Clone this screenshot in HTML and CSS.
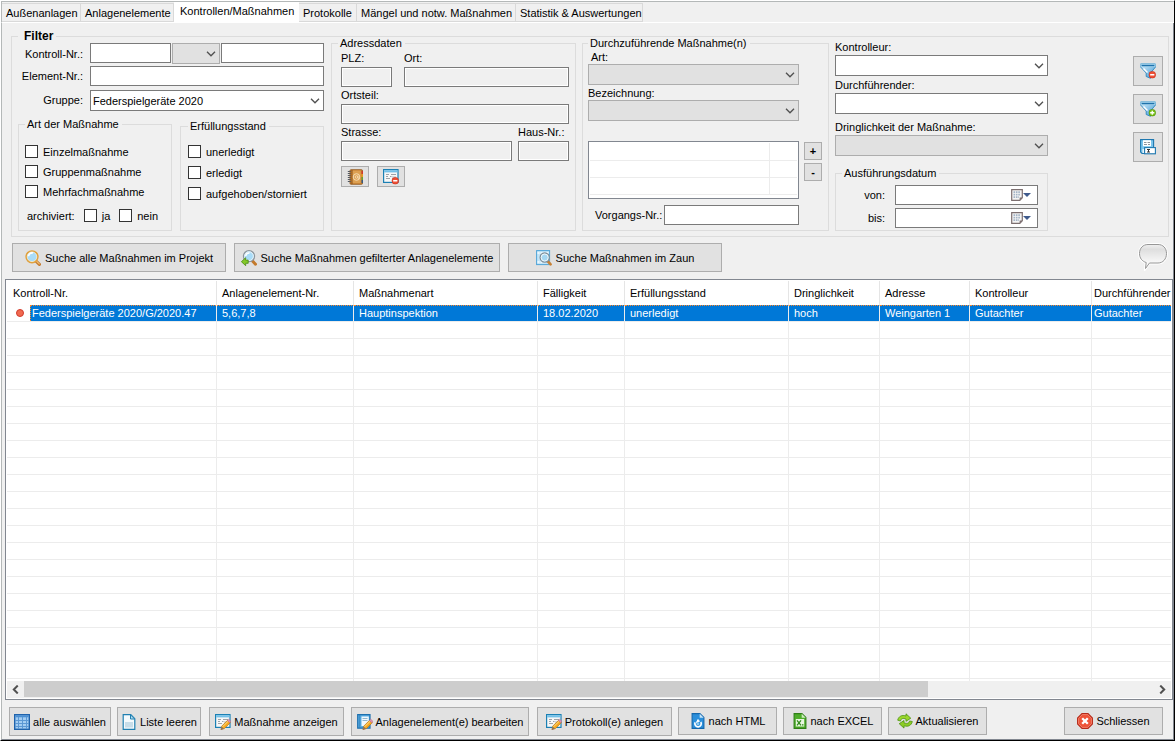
FILE: index.html
```html
<!DOCTYPE html>
<html lang="de">
<head>
<meta charset="utf-8">
<title>Kontrollen/Maßnahmen</title>
<link rel="stylesheet" href="styles.css">
</head>
<body>
<svg class="sprite" aria-hidden="true">
  <defs>
    <linearGradient id="g-blue" x1="0" y1="0" x2="1" y2="1"><stop offset="0" stop-color="#d4eefc"/><stop offset="1" stop-color="#3d97d3"/></linearGradient>
    <linearGradient id="g-bubble" x1="0" y1="0" x2="0" y2="1"><stop offset="0" stop-color="#f0f0f0"/><stop offset=".2" stop-color="#dedede"/><stop offset=".8" stop-color="#fafafa"/></linearGradient>
  </defs>
  <symbol id="i-chevron" viewBox="0 0 10 6"><path d="M1 .8l4 4 4-4" fill="none" stroke="#505050" stroke-width="1.3"/></symbol>
  <symbol id="i-pencil" viewBox="0 0 16 16">
    <path d="M6 15.5l.8-3.4 6-6 2.6 2.5-6 6z" fill="#f7a81e" stroke="#b9761b" stroke-width=".7"/>
    <path d="M7.6 12.8l6-6" stroke="#ffe08a" stroke-width="1"/>
    <path d="M12.4 6.4l1.3-1.2 2.2 2-1.2 1.5z" fill="#dd8fae" stroke="#b4678b" stroke-width=".5"/>
    <path d="M5.6 15.9l1-3.3 2.4 2.2z" fill="#8a7360"/>
  </symbol>
  <symbol id="i-minus" viewBox="0 0 8 8"><circle cx="4" cy="4" r="3.6" fill="#ee5036" stroke="#c9301c" stroke-width=".7"/><path d="M1.8 4h4.4" stroke="#fff" stroke-width="1.5"/></symbol>
  <symbol id="i-plus" viewBox="0 0 8 8"><circle cx="4" cy="4" r="3.6" fill="#7cc31a" stroke="#4c8f0c" stroke-width=".7"/><path d="M1.8 4h4.4M4 1.8v4.4" stroke="#fff" stroke-width="1.4"/></symbol>
  <symbol id="i-form" viewBox="0 0 16 16">
    <rect x=".6" y=".6" width="14.4" height="12.8" fill="#f7f7f7" stroke="#1b80b4" stroke-width="1.2"/>
    <path d="M1.2 2.3h13.2" stroke="#72c0e8" stroke-width="2.2"/>
    <path d="M3 5.500h3M3 7.500h2M3 9.500h4M8 5.500h5M7 7.500h1.500" stroke="#9da3a9" stroke-width="1"/>
    <path d="M9 7h4v3H9z" fill="#d4d8dc"/>
  </symbol>
  <symbol id="i-formdel" viewBox="0 0 16 16"><use href="#i-form"/><use href="#i-minus" x="8.500" y="8" width="7.500" height="7.500"/></symbol>
  <symbol id="i-formedit" viewBox="0 0 16 16"><use href="#i-form"/><use href="#i-pencil"/></symbol>
  <symbol id="i-book" viewBox="0 0 16 16">
    <rect x="3" y=".7" width="12.500" height="14.600" rx="1" fill="#c98031" stroke="#8d5316" stroke-width=".8"/>
    <rect x="5.200" y="1.500" width="8.500" height="12.800" fill="#dda052"/>
    <path d="M5 1v14" stroke="#7f4a18" stroke-width=".8"/>
    <path d="M15.200 2v3" stroke="#d8332b" stroke-width="1.300"/><path d="M15.200 5v3" stroke="#f3a51f" stroke-width="1.300"/><path d="M15.200 8v3" stroke="#5ea832" stroke-width="1.300"/><path d="M15.200 11v3" stroke="#26598e" stroke-width="1.300"/>
    <path d="M.8 2.500h3M.8 4.500h3M.8 6.500h3M.8 8.500h3M.8 10.500h3M.8 12.500h3" stroke="#565a60" stroke-width="1"/>
    <circle cx="9.500" cy="8" r="3.300" fill="none" stroke="#f6ddb4" stroke-width="1"/><circle cx="9.500" cy="8" r="1.300" fill="none" stroke="#f6ddb4" stroke-width=".9"/><path d="M11 6.500v2.800h1.600" fill="none" stroke="#f6ddb4" stroke-width=".8"/>
  </symbol>
  <symbol id="i-funnel" viewBox="0 0 16 16">
    <path d="M.6 1.500v2.500l5.600 6v3.500l4.300 1.800V10l5-6V1.500z" fill="url(#g-blue)" stroke="#2b86bd" stroke-width=".9"/>
    <path d="M.5.700h15v3.100H.5z" fill="#c4e7f8"/>
    <path d="M.5.900h15" stroke="#4b9fcf" stroke-width=".9"/>
    <path d="M1.500 2.600h13" stroke="#1f72ab" stroke-width="1.400"/>
    <path d="M3.500 5.500l4 4" stroke="#fff" stroke-width="1.400"/>
  </symbol>
  <symbol id="i-funneldel" viewBox="0 0 16 16"><use href="#i-funnel"/><use href="#i-minus" x="8.500" y="8" width="7.500" height="7.500"/></symbol>
  <symbol id="i-funneladd" viewBox="0 0 16 16"><use href="#i-funnel"/><use href="#i-plus" x="8.500" y="8" width="7.500" height="7.500"/></symbol>
  <symbol id="i-save" viewBox="0 0 16 16">
    <path d="M.6.600h13v13.800H2L.6 13z" fill="#7bc5ec" stroke="#1f78b0" stroke-width="1.100"/>
    <path d="M3 1.200h8v6H3z" fill="#fff"/><path d="M4 3.500h2.500M7.500 3.500H10M4 5.500h3M8 5.500h2" stroke="#8c949b" stroke-width="1"/>
    <path d="M2.500 10h3v4h-3z" fill="#e9f5fb"/>
    <rect x="4.600" y="8.600" width="10.800" height="6.200" fill="#fff" stroke="#1f78b0" stroke-width="1.100"/>
    <path d="M7 10.500h3M7 13h3M8.500 10.500V13" stroke="#333" stroke-width="1"/>
  </symbol>
  <symbol id="i-calendar" viewBox="0 0 12 12">
    <path d="M.7.700h10.600v8L8.800 11.300H.7z" fill="#f4f4f4" stroke="#7c6f70" stroke-width="1.200"/>
    <path d="M2.500 3.200h7M2.500 5.700h7M2.500 8.200h5.500" stroke="#a4b4c6" stroke-width="1.800" stroke-dasharray="1.600 .8"/>
    <path d="M11.300 8.500H8.600v2.800z" fill="#7c6f70"/>
  </symbol>
  <symbol id="i-lens" viewBox="0 0 16 16">
    <path d="M11 11.200l3.400 3.200" stroke="#c47a2c" stroke-width="3.200" stroke-linecap="round"/><path d="M11.500 11.200l2.800 2.700" stroke="#f1bd72" stroke-width="1.200" stroke-linecap="round"/>
    <circle cx="7" cy="6.800" r="5.800" fill="#a9dcf8" stroke="#e0a03c" stroke-width="1.700"/>
    <circle cx="7" cy="6.800" r="4.800" fill="none" stroke="#fbf3dd" stroke-width=".7"/>
    <path d="M3.500 6.200a3.600 3.600 0 0 1 4.500-3.200" fill="none" stroke="#fff" stroke-width="1.600"/>
  </symbol>
  <symbol id="i-lensback" viewBox="0 0 16 16">
    <path d="M11.500 11l3 3.200" stroke="#c47a2c" stroke-width="3" stroke-linecap="round"/>
    <circle cx="8" cy="6.200" r="5.500" fill="#a9dcf8" stroke="#8d959c" stroke-width="1.300"/>
    <circle cx="8" cy="6.200" r="4.400" fill="none" stroke="#f2f6f8" stroke-width=".9"/>
    <path d="M4.800 6a3.400 3.400 0 0 1 3.700-3.100" fill="none" stroke="#fff" stroke-width="1.500"/>
    <path d="M.4 11.700l4.300-4v2.400h2.500v3.200H4.700v2.400z" fill="#84c928" stroke="#478a12" stroke-width=".8"/>
  </symbol>
  <symbol id="i-lensbox" viewBox="0 0 16 16">
    <rect x=".6" y=".6" width="13" height="14" fill="#c3e5f8" stroke="#4fa3d8" stroke-width="1"/><path d="M1.500 3h11M1.500 12h9" stroke="#eaf6fd" stroke-width="2" stroke-dasharray="2 1"/>
    <path d="M12 11.500l2.600 2.800" stroke="#c78135" stroke-width="2.600" stroke-linecap="round"/>
    <circle cx="8.700" cy="7.500" r="4.600" fill="#a5d7f2" stroke="#7f8b94" stroke-width="1.200"/><circle cx="8.700" cy="7.500" r="3.500" fill="none" stroke="#eef5f9" stroke-width="1"/>
  </symbol>
  <symbol id="i-grid" viewBox="0 0 16 16">
    <rect x=".7" y=".7" width="14.600" height="14.600" fill="#a3cdf2" stroke="#1f63ac" stroke-width="1.400"/><path d="M1.400 2.300h13.200" stroke="#4b8fd2" stroke-width="2"/>
    <path d="M4.500 3v12M8.500 3v12M12.500 3v12M1 6.500h14M1 9.500h14M1 12.500h14" stroke="#5b98d4" stroke-width="1"/>
  </symbol>
  <symbol id="i-page" viewBox="0 0 13 16">
    <path d="M.7.700h7.600l4 4v10.600H.7z" fill="#f4fafd" stroke="#2080b2" stroke-width="1.200"/><path d="M8 .8v4.200h4.200z" fill="#b9def0" stroke="#2080b2" stroke-width="1"/>
    <path d="M2.500 8h8v5.500h-8z" fill="#c7dde9"/>
  </symbol>
  <symbol id="i-bookedit" viewBox="0 0 16 16">
    <path d="M.7.700H13v13.500H.7z" fill="#5aaee4" stroke="#1e70ae" stroke-width="1.200"/><path d="M4.500 2.500h7.300v9.500H4.500z" fill="#f1f8fc"/><path d="M2.800 1v13" stroke="#2c7fba" stroke-width=".9"/>
    <path d="M5.500 4.500h5M5.500 6.500h5" stroke="#8fb6ce" stroke-width="1"/><use href="#i-pencil"/>
  </symbol>
  <symbol id="i-html" viewBox="0 0 13 16">
    <path d="M.6.600h7.800l4 4v10.800H.6z" fill="#2b8fdb" stroke="#1467ad" stroke-width="1.100"/><path d="M8.200.800v4h4z" fill="#c6e4f8"/>
    <path d="M6.500 6.500l1.400 1.800-3 1.200z" fill="#fff" stroke="#fff" stroke-width="1"/><path d="M9.300 9a3.200 3.200 0 1 1-5.700.4" fill="none" stroke="#fff" stroke-width="1.700"/><circle cx="6.400" cy="10.800" r="1.500" fill="#8cc8f0"/>
  </symbol>
  <symbol id="i-excel" viewBox="0 0 13 16">
    <path d="M.6.600h7.800l4 4v10.800H.6z" fill="#4fae2a" stroke="#2f7f17" stroke-width="1.100"/><path d="M8.200.800v4h4z" fill="#cdecbf"/>
    <rect x="2.300" y="6" width="8.400" height="7.500" fill="#e8f6e0"/><path d="M3.500 7.300l4 5M7.500 7.300l-4 5M8.500 11.800h1.500" stroke="#2f8a18" stroke-width="1.300"/>
  </symbol>
  <symbol id="i-refresh" viewBox="0 0 16 16">
    <path d="M.7 7.200C1.500 3.300 5 1.600 9 3V.8l4.800 4.400L9 8.300V6.100C6.500 5 4 5.200 3.500 8z" fill="#9ad62c" stroke="#4c930f" stroke-width=".8"/>
    <path d="M15.300 8.500c-.8 4-4.300 5.600-8.300 4.300v2.300l-4.800-4.400L7 7.500v2.300c2.500 1 5 .9 5.500-1.800z" fill="#8ccc25" stroke="#4c930f" stroke-width=".8"/>
  </symbol>
  <symbol id="i-close" viewBox="0 0 16 16">
    <path d="M5 .6h6L15.400 5v6L11 15.400H5L.6 11V5z" fill="#ee5238" stroke="#b52a1a" stroke-width="1.100"/><path d="M5.300 1.600h5.400l3.700 3.700v5.400l-3.700 3.700H5.300l-3.700-3.700V5.300z" fill="none" stroke="#f7937f" stroke-width=".7"/>
    <path d="M5.200 5.200l5.600 5.600M10.800 5.200l-5.600 5.600" stroke="#fff" stroke-width="2.300"/>
  </symbol>
</svg>

<div class="window">
  <nav class="tabs" role="tablist">
    <button class="tab" role="tab">Außenanlagen</button>
    <button class="tab tab-wide" role="tab">Anlagenelemente</button>
    <button class="tab active" role="tab" aria-selected="true">Kontrollen/Maßnahmen</button>
    <button class="tab tab-slim" role="tab">Protokolle</button>
    <button class="tab" role="tab">Mängel und notw. Maßnahmen</button>
    <button class="tab tab-last" role="tab">Statistik &amp; Auswertungen</button>
  </nav>

  <main class="page">
    <fieldset class="group filter">
      <legend class="filter-title">Filter</legend>
      <div class="col-left">
        <div class="keys">
          <label for="kontroll">Kontroll-Nr.:</label>
          <div class="key-row">
            <input class="box" id="kontroll" type="text">
            <span class="select"><select class="gray" aria-label="Operator"><option></option></select><svg><use href="#i-chevron"/></svg></span>
            <input class="box" type="text" aria-label="Kontroll-Nr. Zusatz">
          </div>
          <label for="element">Element-Nr.:</label>
          <input class="box" id="element" type="text">
          <label for="gruppe">Gruppe:</label>
          <span class="select group-select"><select id="gruppe"><option>Federspielgeräte 2020</option></select><svg><use href="#i-chevron"/></svg></span>
        </div>
        <div class="checks">
          <fieldset class="group check-group art">
            <legend>Art der Maßnahme</legend>
            <label><input type="checkbox">Einzelmaßnahme</label>
            <label><input type="checkbox">Gruppenmaßnahme</label>
            <label><input type="checkbox">Mehrfachmaßnahme</label>
            <div class="archive"><span>archiviert:</span><label><input type="checkbox">ja</label><label><input type="checkbox">nein</label></div>
          </fieldset>
          <fieldset class="group check-group stand">
            <legend>Erfüllungsstand</legend>
            <label><input type="checkbox">unerledigt</label>
            <label><input type="checkbox">erledigt</label>
            <label><input type="checkbox">aufgehoben/storniert</label>
          </fieldset>
        </div>
      </div>

      <fieldset class="group address">
        <legend>Adressdaten</legend>
        <div class="pair pair-plz">
          <label class="field">PLZ:<input class="box locked" type="text" readonly></label>
          <label class="field">Ort:<input class="box locked" type="text" readonly></label>
        </div>
        <label class="field">Ortsteil:<input class="box locked" type="text" readonly></label>
        <div class="pair pair-street">
          <label class="field">Strasse:<input class="box locked" type="text" readonly></label>
          <label class="field">Haus-Nr.:<input class="box locked" type="text" readonly></label>
        </div>
        <div class="address-tools">
          <button class="btn mini" aria-label="Adressbuch"><svg class="icon"><use href="#i-book"/></svg></button>
          <button class="btn mini" aria-label="Adresse entfernen"><svg class="icon"><use href="#i-formdel"/></svg></button>
        </div>
      </fieldset>

      <fieldset class="group measures">
        <legend>Durchzuführende Maßnahme(n)</legend>
        <label class="indent" for="art">Art:</label>
        <span class="select"><select class="gray" id="art"><option></option></select><svg><use href="#i-chevron"/></svg></span>
        <label for="bez">Bezeichnung:</label>
        <span class="select"><select class="gray" id="bez"><option></option></select><svg><use href="#i-chevron"/></svg></span>
        <div class="picked">
          <div class="picked-frame">
            <table class="picked-list">
              <tr><td></td><td class="picked-side"></td></tr>
              <tr><td></td><td class="picked-side"></td></tr>
              <tr><td></td><td class="picked-side"></td></tr>
            </table>
          </div>
          <div class="picked-tools"><button class="btn sign">+</button><button class="btn sign">-</button></div>
        </div>
        <div class="process"><label for="vorgang">Vorgangs-Nr.:</label><input class="box" id="vorgang" type="text"></div>
      </fieldset>

      <div class="col-right">
        <label for="kontrolleur">Kontrolleur:</label>
        <span class="select"><select id="kontrolleur"><option></option></select><svg><use href="#i-chevron"/></svg></span>
        <label class="second" for="durch">Durchführender:</label>
        <span class="select"><select id="durch"><option></option></select><svg><use href="#i-chevron"/></svg></span>
        <label class="urgency" for="dring">Dringlichkeit der Maßnahme:</label>
        <span class="select"><select class="gray" id="dring"><option></option></select><svg><use href="#i-chevron"/></svg></span>
        <fieldset class="group dates">
          <legend>Ausführungsdatum</legend>
          <label for="von">von:</label>
          <span class="date"><input class="box" id="von" type="text"><svg class="cal"><use href="#i-calendar"/></svg><i class="arrow"></i></span>
          <label for="bis">bis:</label>
          <span class="date"><input class="box" id="bis" type="text"><svg class="cal"><use href="#i-calendar"/></svg><i class="arrow"></i></span>
        </fieldset>
      </div>

      <div class="filter-tools">
        <button class="btn square" aria-label="Filter entfernen"><svg class="icon"><use href="#i-funneldel"/></svg></button>
        <button class="btn square" aria-label="Filter hinzufügen"><svg class="icon"><use href="#i-funneladd"/></svg></button>
        <button class="btn square" aria-label="Filter speichern"><svg class="icon"><use href="#i-save"/></svg></button>
      </div>
    </fieldset>

    <div class="search-bar">
      <button class="btn search"><svg class="icon"><use href="#i-lens"/></svg>Suche alle Maßnahmen im Projekt</button>
      <button class="btn search search-wide"><svg class="icon"><use href="#i-lensback"/></svg>Suche Maßnahmen gefilterter Anlagenelemente</button>
      <button class="btn search"><svg class="icon"><use href="#i-lensbox"/></svg>Suche Maßnahmen im Zaun</button>
      <svg class="bubble" viewBox="0 0 30 28"><path d="M10 1h10c5 0 9 4 9 9.500S25 20.500 20 20.500h-8.500L7 26.500l.5-6.700C3.500 18.500 1 15 1 10.500 1 5 5 1 10 1z" fill="none" stroke="#fff" stroke-width="2"/><path d="M10 1.500h10c5 0 8.500 3.500 8.500 9s-3.500 9.500-8.500 9.500h-8.500L7.500 25.500l.7-6C4 18.300 1.500 15 1.500 10.500c0-5.500 3.500-9 8.500-9z" fill="url(#g-bubble)" stroke="#969696" stroke-width="1"/></svg>
    </div>

    <div class="list">
      <div class="list-view">
        <table class="grid">
          <colgroup><col class="c1"><col class="c2"><col class="c3"><col class="c4"><col class="c5"><col class="c6"><col class="c7"><col class="c8"><col></colgroup>
          <thead><tr><th>Kontroll-Nr.</th><th>Anlagenelement-Nr.</th><th>Maßnahmenart</th><th>Fälligkeit</th><th>Erfüllungsstand</th><th>Dringlichkeit</th><th>Adresse</th><th>Kontrolleur</th><th>Durchführender</th></tr></thead>
          <tbody>
            <tr class="selected"><td class="first"><span class="first-row"><i class="dot"></i><span class="first-text">Federspielgeräte 2020/G/2020.47</span></span></td><td>5,6,7,8</td><td>Hauptinspektion</td><td>18.02.2020</td><td>unerledigt</td><td>hoch</td><td>Weingarten 1</td><td>Gutachter</td><td>Gutachter</td></tr>
            <tr class="blank"><td></td><td></td><td></td><td></td><td></td><td></td><td></td><td></td><td></td></tr>
          </tbody>
        </table>
      </div>
      <div class="scroll">
        <button class="scroll-btn" aria-label="nach links"><svg viewBox="0 0 8 8"><path d="M6 .500L2.500 4 6 7.500" fill="none" stroke="#505050" stroke-width="1.800"/></svg></button>
        <div class="track"><div class="thumb"></div></div>
        <button class="scroll-btn" aria-label="nach rechts"><svg viewBox="0 0 8 8"><path d="M2 .500L5.500 4 2 7.500" fill="none" stroke="#505050" stroke-width="1.800"/></svg></button>
      </div>
    </div>

    <div class="actions">
      <button class="btn act a1"><svg class="icon"><use href="#i-grid"/></svg>alle auswählen</button>
      <button class="btn act a2"><svg class="icon"><use href="#i-page"/></svg>Liste leeren</button>
      <button class="btn act a3"><svg class="icon"><use href="#i-formedit"/></svg>Maßnahme anzeigen</button>
      <button class="btn act a4"><svg class="icon"><use href="#i-bookedit"/></svg>Anlagenelement(e) bearbeiten</button>
      <button class="btn act a3"><svg class="icon"><use href="#i-formedit"/></svg>Protokoll(e) anlegen</button>
      <button class="btn act a5"><svg class="icon"><use href="#i-html"/></svg>nach HTML</button>
      <button class="btn act a5"><svg class="icon"><use href="#i-excel"/></svg>nach EXCEL</button>
      <button class="btn act a5"><svg class="icon"><use href="#i-refresh"/></svg>Aktualisieren</button>
      <button class="btn act a5 close"><svg class="icon"><use href="#i-close"/></svg>Schliessen</button>
    </div>
  </main>
</div>
</body>
</html>
```
FILE: styles.css
```css
* { box-sizing: border-box; }
body {
  margin: 0;
  background: #f0f0f0;
  color: #000;
  font: 11px/14px "Liberation Sans", Arial, sans-serif;
}
button, input, select { font: inherit; color: inherit; margin: 0; }
.sprite { position: absolute; width: 0; height: 0; }

.window {
  display: flex;
  flex-direction: column;
  min-height: 100vh;
  border-left: 1px solid #fff;
  border-top: 1px solid #fff;
  border-right: 1px solid #000;
  border-bottom: 1px solid #000;
}

/* tabs */
.tabs {
  display: flex;
  align-items: flex-end;
  height: 22px;
  border-top: 1px solid #b4b8b8;
  border-left: 1px solid #b4b8b8;
  border-bottom: 1px solid #fff;
}
.tab {
  height: 19px;
  padding: 0 4px;
  border: 1px solid #d9d9d9;
  border-left: 0;
  background: #f0f0f0;
  width: 79px;
  white-space: nowrap;
  text-align: left;
}
.tab-wide { width: 93px; }
.tab.active { width: 125px; height: 20px; padding: 0 0 3px 6px; border: 0; background: #fff; }
.tab-slim { width: 58px; }
.tab-slim + .tab { width: 159px; }
.tab-last { width: 127px; }

.page {
  flex: 1;
  display: flex;
  flex-direction: column;
  padding: 13px 0 3px;
  border-left: 1px solid #b4b8b8;
  border-right: 1px solid #828790;
  border-bottom: 1px solid #828790;
}

/* groups */
.group { margin: 0; padding: 0; border: 1px solid #dcdcdc; min-width: 0; }
.group legend {
  height: 1px;
  line-height: 1px;
  padding: 0 3px 0 2px;
  white-space: nowrap;
}
.group .filter-title { padding-left: 6px; font-weight: bold; font-size: 12px; }
.address legend { margin-left: -3px; }
.dates legend { margin-left: 6px; }

.filter {
  display: flex;
  gap: 6px;
  height: 201px;
  margin: 0 4px 0 9px;
  padding: 6px 5px 6px 6px;
}
.col-left { width: 306px; display: flex; flex-direction: column; justify-content: space-between; margin-right: 1px; }
.keys { display: grid; grid-template-columns: 65px 1fr; gap: 2px 7px; align-items: center; }
.keys > label { text-align: right; }
.key-row { display: grid; grid-template-columns: 81px 48px 1fr; gap: 1px; }
.group-select { margin-top: 2px; }

.box {
  width: 100%;
  height: 20px;
  padding: 0 3px;
  border: 1px solid #7a7a7a;
  border-radius: 0;
  background: #fff;
}
.locked { background: #f0f0f0; box-shadow: inset 0 0 0 1px #fff; }

.select { position: relative; display: block; }
.select select {
  display: block;
  width: 100%;
  height: 21px;
  padding: 0 2px;
  border: 1px solid #7a7a7a;
  border-radius: 0;
  background: #fff;
  appearance: none;
}
.select .gray { background: #e1e1e1; border-color: #adadad; }
.select svg { position: absolute; right: 4px; top: 8px; width: 10px; height: 6px; pointer-events: none; }

.checks { display: flex; align-items: flex-end; justify-content: space-between; }
.check-group label { display: flex; align-items: center; gap: 5px; white-space: nowrap; }
.check-group input {
  appearance: none;
  width: 13px;
  height: 13px;
  border: 1px solid #333;
  background: #fff;
}
.art { width: 154px; height: 107px; padding: 20px 6px 0; display: flex; flex-direction: column; gap: 7px; }
.art > label, .stand > label { height: 13px; }
.stand { width: 144px; height: 105px; padding: 18px 7px 0; display: flex; flex-direction: column; gap: 8px; }
.archive { display: flex; align-items: center; gap: 9px; height: 13px; margin-top: 4px; padding-left: 2px; }

.address { width: 245px; padding: 6px 6px 0 9px; }
.field { display: flex; flex-direction: column; padding-top: 1px; }
.address .field { gap: 2px; }
.pair { display: grid; }
.pair-plz { grid-template-columns: 51px 1fr; gap: 12px; }
.pair-street { grid-template-columns: 1fr 51px; gap: 6px; }
.address-tools { display: flex; gap: 8px; margin-top: 5px; }

.btn {
  display: flex;
  align-items: center;
  justify-content: center;
  gap: 4px;
  padding: 0;
  border: 1px solid #adadad;
  border-radius: 0;
  background: #e1e1e1;
  white-space: nowrap;
}
.icon { width: 16px; height: 16px; flex: none; }
.mini { width: 28px; height: 21px; }
.square { width: 30px; height: 30px; }
.sign { width: 18px; height: 18px; font-weight: bold; }

.measures { width: 247px; padding: 6px 6px 0 5px; }
.measures > label { display: block; height: 14px; }
.measures > .indent { padding-left: 3px; }
.measures > .select { width: 211px; margin-bottom: 1px; }
.picked { display: flex; gap: 5px; margin-top: 20px; }
.picked-frame { width: 211px; height: 58px; padding: 1px; border: 1px solid #828790; background: #fff; }
.picked-list { width: 100%; border-collapse: collapse; }
.picked-list td { height: 17px; padding: 0; border-bottom: 1px solid #ececec; }
.picked-list .picked-side { width: 28px; border-left: 1px solid #ececec; }
.picked-tools { display: flex; flex-direction: column; gap: 3px; padding-top: 1px; }
.process { display: flex; align-items: center; justify-content: space-between; width: 211px; margin-top: 6px; padding-left: 7px; }
.process .box { width: 135px; }

.col-right { width: 213px; }
.col-right > label { display: block; padding: 1px 0; }
.col-right > label:first-child { margin-top: -4px; }
.col-right > .second { padding-top: 2px; }
.col-right > .urgency { padding-top: 6px; }
.dates { display: grid; grid-template-columns: 49px 143px; gap: 3px 10px; align-items: center; margin-top: 17px; height: 58px; padding: 0 0 2px; align-content: end; }
.dates label { text-align: right; }
.date { position: relative; display: block; }
.cal { position: absolute; right: 15px; top: 4px; width: 12px; height: 12px; }
.arrow { position: absolute; right: 7px; top: 8px; border: 4px solid transparent; border-top-color: #3f5a8c; border-bottom: 0; }

.filter-tools { margin-left: auto; padding-top: 13px; display: flex; flex-direction: column; gap: 8px; }

/* search */
.search-bar { display: flex; gap: 8px; padding: 6px 5px 7px 10px; }
.search { width: 214px; height: 29px; }
.search-wide { width: 266px; }
.bubble { width: 30px; height: 28px; margin-left: auto; }

/* result list */
.list {
  flex: 1;
  display: flex;
  flex-direction: column;
  margin: 0 0 0 3px;
  padding: 1px;
  border: 1px solid #828790;
  background: #fff;
}
.list-view { flex: 1; display: grid; overflow: hidden; }
.grid { width: 100%; height: 100%; table-layout: fixed; border-collapse: separate; border-spacing: 0; }
.c1 { width: 210px; } .c2 { width: 137px; } .c3 { width: 184px; } .c4 { width: 87px; }
.c5 { width: 164px; } .c6 { width: 91px; } .c7 { width: 90px; } .c8 { width: 122px; }
.grid th {
  height: 24px;
  padding: 0 0 0 5px;
  border-right: 1px solid #e5e5e5;
  font-weight: normal;
  text-align: left;
  white-space: nowrap;
}
.grid th:first-child { padding-left: 6px; }
.grid td { padding: 0 0 0 5px; border-right: 1px solid #ececec; white-space: nowrap; }
.grid th:last-child, .grid td:last-child { border-right: 0; padding-left: 2px; }
.selected td { height: 17px; border-bottom: 1px solid #ececec; background: #0078d7; color: #fff; border-top: 1px dotted #ff8728; line-height: 15px; }
.grid .first { padding: 0; border-top: 0; background: #fff; }
.first-row { display: flex; align-items: center; gap: 6px; padding-left: 9px; }
.first-text { flex: 1; padding-left: 1px; background: #0078d7; border-top: 1px dotted #ff8728; border-left: 1px dotted #ff8728; }
.dot { width: 8px; height: 8px; border: 1px solid #d23b2d; border-radius: 50%; background: #f06a50; }
.blank td { background: repeating-linear-gradient(#fff 0 16px, #ececec 16px 17px); }

.scroll { display: flex; height: 17px; background: #f0f0f0; }
.scroll-btn { width: 17px; padding: 0; border: 0; background: none; }
.scroll-btn svg { display: block; width: 9px; height: 9px; margin: 0 auto; }
.track { flex: 1; padding-bottom: 1px; }
.thumb { width: 80%; height: 100%; background: #cdcdcd; }

/* actions */
.actions { display: flex; gap: 6px; padding: 7px 10px 0 7px; }
.act { height: 29px; gap: 3px; }
.a1 { width: 102px; }
.a2 { width: 84px; }
.a3 { width: 135px; margin-left: 2px; }
.a4 { width: 178px; margin-left: 1px; }
.a5 { width: 99px; height: 28px; }
.close { margin-left: auto; }
```
